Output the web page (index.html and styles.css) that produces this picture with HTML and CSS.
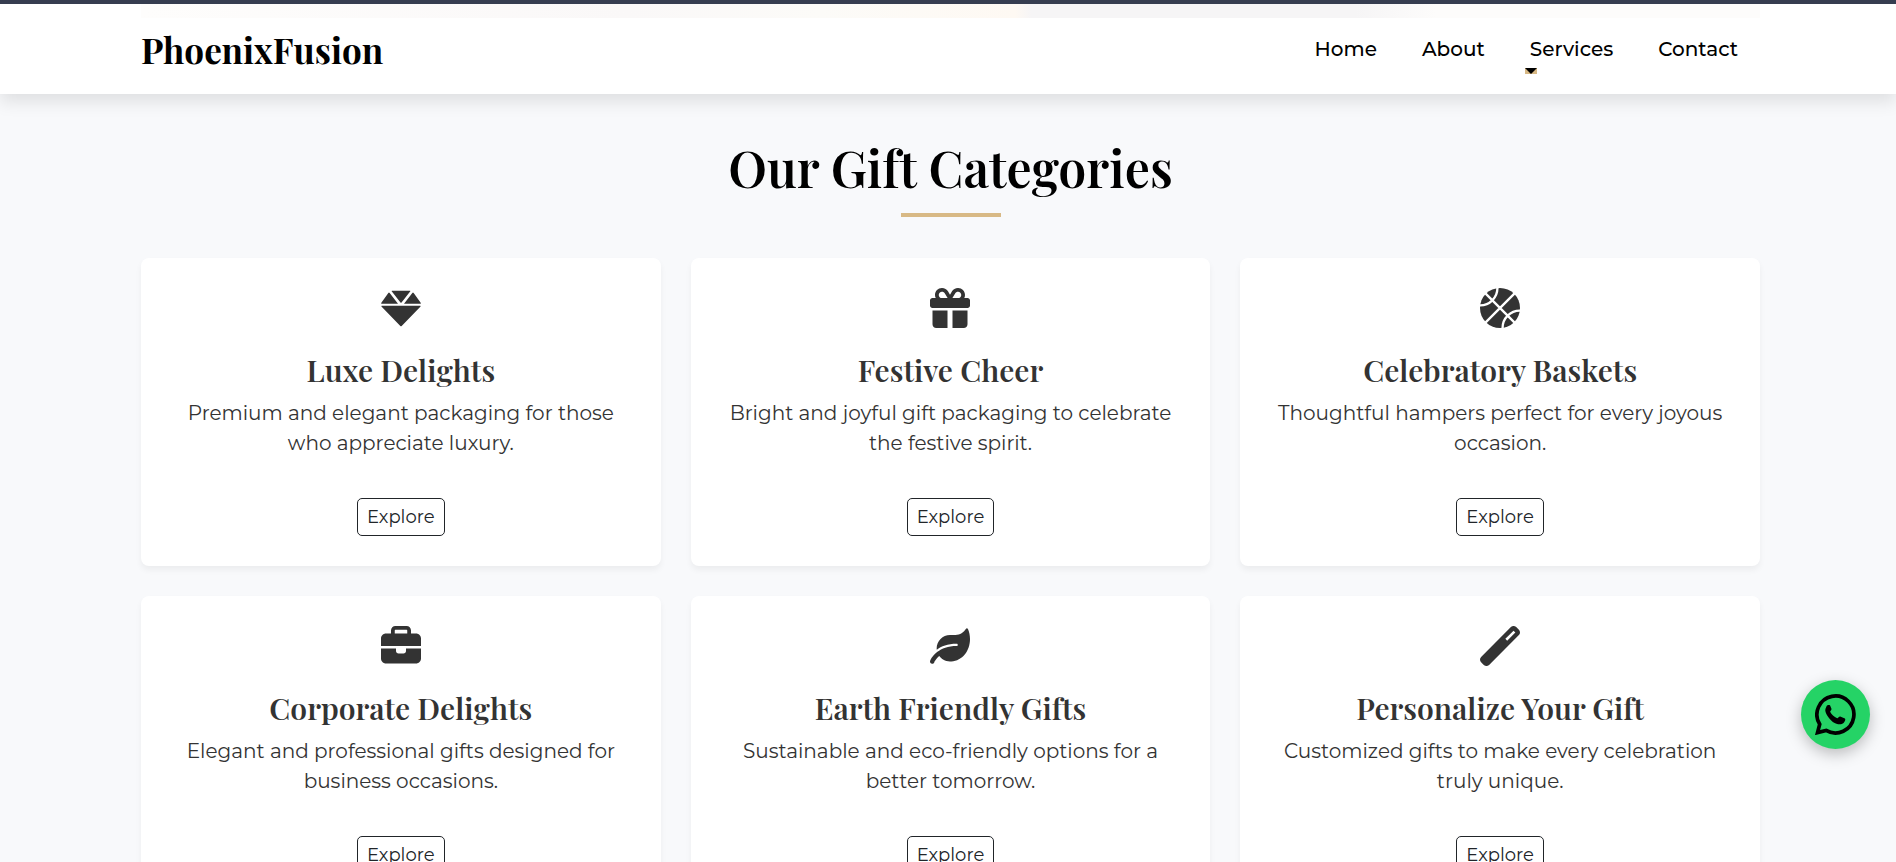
FILE: index.html
```html
<!DOCTYPE html>
<html lang="en">
<head>
  <meta charset="UTF-8">
  <meta name="viewport" content="width=device-width, initial-scale=1.0">
  <title>PhoenixFusion</title>
  <link rel="stylesheet" href="styles.css">
</head>
<body>
  <header class="header">
    <div class="container navbar">
      <a class="logo" href="#">PhoenixFusion</a>
      <nav class="nav">
        <a class="nav-link" href="#">Home</a>
        <a class="nav-link" href="#">About</a>
        <a class="nav-link dropdown" href="#">Services</a>
        <a class="nav-link" href="#">Contact</a>
      </nav>
    </div>
  </header>

  <main class="container categories">
    <h1 class="section-title">Our Gift Categories</h1>
    <div class="cards">
      <div class="card">
        <svg class="card-icon" viewBox="0 -2 120 120"><path d="M33 6h54q2 0 1 2L61 42h-2L32 8q-1-2 1-2zM22 13q2-3 4 0l25 32H1q-1-1 0-3zM94 13q2-3 4 0l21 29q1 2 0 3H69zM2 51h116q2 1 0 3L62 112q-2 2-4 0L2 54q-2-2 0-3z"/></svg>
        <h2 class="card-title">Luxe Delights</h2>
        <p class="card-text">Premium and elegant packaging for those who appreciate luxury.</p>
        <button class="btn">Explore</button>
      </div>
      <div class="card">
        <svg class="card-icon" viewBox="0 0 512 512"><path d="M190.500 68.800L225.300 128H224 152c-22.100 0-40-17.900-40-40s17.900-40 40-40h2.200c14.900 0 28.800 7.900 36.300 20.800zM64 88c0 14.400 3.500 28 9.600 40H32c-17.700 0-32 14.300-32 32v64c0 17.700 14.300 32 32 32H480c17.700 0 32-14.300 32-32V160c0-17.700-14.300-32-32-32H438.400c6.100-12 9.600-25.600 9.600-40c0-48.600-39.400-88-88-88h-2.200c-31.900 0-61.500 16.900-77.700 44.400L256 85.500l-24.100-41C215.700 16.900 186.100 0 154.200 0H152C103.400 0 64 39.400 64 88zm336 0c0 22.100-17.900 40-40 40H288h-1.300l34.800-59.200C329.100 55.900 342.900 48 357.800 48H360c22.100 0 40 17.900 40 40zM32 288V464c0 26.500 21.500 48 48 48H224V288H32zM288 512H432c26.500 0 48-21.500 48-48V288H288V512z"/></svg>
        <h2 class="card-title">Festive Cheer</h2>
        <p class="card-text">Bright and joyful gift packaging to celebrate the festive spirit.</p>
        <button class="btn">Explore</button>
      </div>
      <div class="card">
        <svg class="card-icon" viewBox="0 0 120 120"><circle cx="60" cy="60" r="60"/><path class="seam" d="M14 14l92 92M106 14L14 106M52 -4A52 52 0 0 1 -4 52M68 124A52 52 0 0 1 124 68"/></svg>
        <h2 class="card-title">Celebratory Baskets</h2>
        <p class="card-text">Thoughtful hampers perfect for every joyous occasion.</p>
        <button class="btn">Explore</button>
      </div>
      <div class="card">
        <svg class="card-icon" viewBox="0 0 512 512"><path d="M184 48H328c4.400 0 8 3.600 8 8V96H176V56c0-4.400 3.600-8 8-8zm-56 8V96H64C28.700 96 0 124.700 0 160v96H192 320 512V160c0-35.300-28.700-64-64-64H384V56c0-30.900-25.100-56-56-56H184c-30.900 0-56 25.100-56 56zM512 288H320v32c0 17.700-14.300 32-32 32H224c-17.700 0-32-14.300-32-32V288H0V416c0 35.300 28.700 64 64 64H448c35.300 0 64-28.700 64-64V288z"/></svg>
        <h2 class="card-title">Corporate Delights</h2>
        <p class="card-text">Elegant and professional gifts designed for business occasions.</p>
        <button class="btn">Explore</button>
      </div>
      <div class="card">
        <svg class="card-icon" viewBox="0 0 576 512"><path d="M546.200 9.700c-5.600-12.500-21.600-13-28.300-1.200C486.900 62.400 431.400 96 368 96h-80C182 96 96 182 96 288c0 7 .8 13.700 1.500 20.500C161.300 262.800 253.400 224 384 224c8.800 0 16 7.200 16 16s-7.200 16-16 16C132.600 256 26 410.100 2.400 468c-6.600 16.300 1.200 34.900 17.500 41.600 16.400 6.800 35-1.100 41.800-17.300 1.500-3.600 20.900-47.900 71.900-90.600 32.400 43.900 94 85.800 174.900 77.200C465.500 467.500 576 326.700 576 154.300c0-50.200-10.800-102.200-29.800-144.600z"/></svg>
        <h2 class="card-title">Earth Friendly Gifts</h2>
        <p class="card-text">Sustainable and eco-friendly options for a better tomorrow.</p>
        <button class="btn">Explore</button>
      </div>
      <div class="card">
        <svg class="card-icon" viewBox="0 0 512 512"><path d="M14.100 463.300c-18.700-18.700-18.700-49.100 0-67.900L395.400 14.100c18.700-18.700 49.100-18.700 67.900 0l34.600 34.600c18.700 18.700 18.700 49.100 0 67.900L116.500 497.900c-18.700 18.700-49.100 18.700-67.900 0L14.100 463.300zM347.600 187.600l105-105L429.400 59.300l-105 105 23.300 23.300z"/></svg>
        <h2 class="card-title">Personalize Your Gift</h2>
        <p class="card-text">Customized gifts to make every celebration truly unique.</p>
        <button class="btn">Explore</button>
      </div>
    </div>
  </main>

  <a class="whatsapp" href="#" aria-label="WhatsApp">
    <svg class="whatsapp-icon" viewBox="0 0 122 122">
      <path class="bubble" d="M14 90L7.500 115L33 108.500A55 55 0 1 0 14 90Z"/>
      <path d="M34 37c2-4 8-5 11-3l4 10c1 4-4 7-4 9c4 8 12 15 21 19c3 0 6-6 9-5l14 6c3 2 0 9-4 13c-8 7-20 4-32-3C41 74 28 55 31 45z"/>
    </svg>
  </a>
</body>
</html>
```
FILE: styles.css
```css
* {
  box-sizing: border-box;
}
body {
  margin: 0;
  background-color: #f8f9fb;
  font-family: Montserrat, Inter, sans-serif;
  font-size: 20px;
  color: #333;
}
.container {
  padding: 0 136px 0 141px;
}
.header {
  position: sticky;
  top: 0;
  z-index: 10;
  background-color: #fff;
  border-top: 4px solid #363d50;
  box-shadow: 0 8px 16px rgba(0, 0, 0, 0.1);
}
.navbar {
  display: flex;
  justify-content: space-between;
  align-items: center;
  height: 90px;
  background: linear-gradient(90deg, #fefdfc, #faf8f8 30%, #fcfbf8 42%, #fef9f3 54%, #f6f5f6 55%, #f6f5f6 75%, #fdfcfb 80%) content-box no-repeat;
  background-size: 100% 14px;
}
.logo {
  font-family: "Playfair Display", "Liberation Serif", serif;
  font-size: 35px;
  font-weight: 700;
  color: #000;
  text-decoration: none;
}
.nav {
  display: flex;
  gap: 45px;
  padding-right: 22px;
}
.nav-link {
  position: relative;
  font-weight: 500;
  color: #000;
  text-decoration: none;
}
.dropdown::after {
  content: "";
  position: absolute;
  left: -5px;
  bottom: -13px;
  border: 6px solid transparent;
  border-top-color: #000;
  border-bottom: 0;
  background-color: #d8b985;
}
.section-title {
  margin: 0 0 41px;
  padding-top: 44px;
  font-family: "Playfair Display", "Liberation Serif", serif;
  font-size: 50px;
  line-height: 60px;
  font-weight: 600;
  text-align: center;
  color: #000;
}
.section-title::after {
  content: "";
  display: block;
  width: 100px;
  height: 4px;
  margin: 15px auto 0;
  background-color: #d8b985;
}
.cards {
  display: grid;
  grid-template-columns: repeat(3, 1fr);
  gap: 30px;
}
.card {
  display: flex;
  flex-direction: column;
  align-items: center;
  padding: 30px;
  background-color: #fff;
  border-radius: 8px;
  box-shadow: 0 4px 6px rgba(0, 0, 0, 0.05);
  text-align: center;
}
.card-icon {
  width: 40px;
  height: 40px;
  fill: #333;
}
.seam {
  fill: none;
  stroke: #fff;
  stroke-width: 7;
}
.card-title {
  margin: 24px 0 10px;
  font-family: "Playfair Display", "Liberation Serif", serif;
  font-size: 30px;
  line-height: 36px;
  font-weight: 600;
}
.card-text {
  margin: 0 0 40px;
  line-height: 30px;
  font-weight: 400;
}
.btn {
  height: 38px;
  padding: 0 9px;
  background-color: #fff;
  border: 1px solid #212529;
  border-radius: 5px;
  font-family: inherit;
  font-size: 18px;
  color: #212529;
  cursor: pointer;
}
.whatsapp {
  position: fixed;
  right: 26px;
  bottom: 113px;
  z-index: 20;
  display: flex;
  justify-content: center;
  align-items: center;
  width: 69px;
  height: 69px;
  background-color: #25d366;
  border-radius: 50%;
  box-shadow: 0 5px 15px rgba(0, 0, 0, 0.25);
}
.whatsapp-icon {
  width: 41px;
  height: 41px;
}
.bubble {
  fill: none;
  stroke: #000;
  stroke-width: 11;
}
```
